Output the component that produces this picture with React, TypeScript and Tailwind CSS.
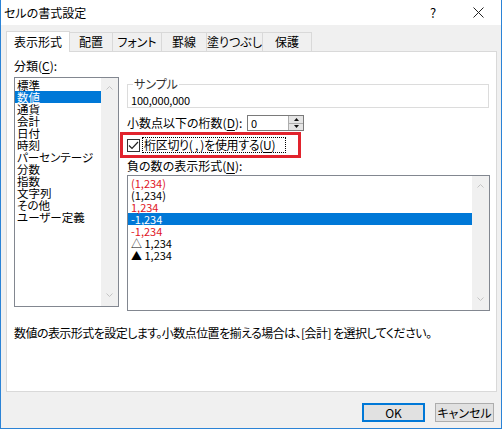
import React from "react";

const jp = "font-['Noto_Sans_CJK_JP','Noto_Sans',sans-serif] [font-feature-settings:'palt']";

const categories = ["標準", "数値", "通貨", "会計", "日付", "時刻", "パーセンテージ", "分数", "指数", "文字列", "その他", "ユーザー定義"];

const negatives = [
  { text: "(1,234)", red: true },
  { text: "(1,234)", red: false },
  { text: "1,234", red: true },
  { text: "-1,234", red: false, selected: true },
  { text: "-1,234", red: true },
  { text: "△ 1,234", red: false },
  { text: "▲ 1,234", red: false },
];

const tabs = [
  { label: "表示形式", w: "w-[64px]" },
  { label: "配置", w: "w-[43px]" },
  { label: "フォント", w: "w-[49px]" },
  { label: "罫線", w: "w-[45px]" },
  { label: "塗りつぶし", w: "w-[56px]" },
  { label: "保護", w: "w-[49px]" },
];

function Chevron({ dir }: { dir: "up" | "down" }) {
  return (
    <svg width="7" height="4" viewBox="0 0 7 4" className="block">
      <path
        d={dir === "up" ? "M0.5 3.5 L3.5 0.5 L6.5 3.5" : "M0.5 0.5 L3.5 3.5 L6.5 0.5"}
        fill="none"
        stroke="#c4c4c4"
        strokeWidth="1"
      />
    </svg>
  );
}

function ScrollBar() {
  return (
    <div className="w-[17px] bg-[#f0f0f0] flex flex-col justify-between items-center pt-[8px] pb-[9px]">
      <Chevron dir="up" />
      <Chevron dir="down" />
    </div>
  );
}

const U = ({ children }: { children: React.ReactNode }) => <span className="underline underline-offset-2">{children}</span>;

export default function App() {
  return (
    <div className={`w-[504px] h-[430px] bg-white text-[12px] leading-[12px] text-black ${jp}`}>
      <div className="w-[502px] h-[429px] border-l border-r border-b border-[#2b83d6] flex flex-col">
        {/* title bar */}
        <div className="h-[25px] bg-white flex items-center">
          <div className="flex-1 pl-[3px] pt-[1px]">セルの書式設定</div>
          <div className="w-[46px] text-center text-[13px]">?</div>
          <div className="w-[45px] flex justify-center">
            <svg width="11" height="11" viewBox="0 0 11 11">
              <path d="M0.5 0.5 L10.5 10.5 M10.5 0.5 L0.5 10.5" stroke="#222" strokeWidth="1" />
            </svg>
          </div>
        </div>

        {/* body */}
        <div className="flex-1 bg-[#f0f0f0] pl-[5px] pt-[6px] flex flex-col">
          <div className="flex items-end">
            {tabs.map((t, i) =>
              i === 0 ? (
                <div
                  key={t.label}
                  className={`${t.w} h-[21px] -mb-px relative z-10 bg-white border-l border-t border-r border-[#d9d9d9] flex items-center justify-center`}
                >
                  {t.label}
                </div>
              ) : (
                <div
                  key={t.label}
                  className={`${t.w} h-[19px] border-t border-r border-[#d9d9d9] flex items-center justify-center`}
                >
                  {t.label}
                </div>
              )
            )}
          </div>

          {/* panel */}
          <div className="w-[491px] h-[341px] bg-white border border-[#d9d9d9] flex flex-col">
            <div className="flex items-start">
              {/* category column */}
              <div className="pl-[7px] pt-[8px] flex flex-col">
                <div>
                  分類(<U>C</U>):
                </div>
                <div className="mt-[5px] w-[105px] h-[230px] border border-[#828790] flex">
                  <div className="flex-1 pt-[1px]">
                    {categories.map((c, i) => (
                      <div
                        key={c}
                        className={`h-[12px] leading-[12px] text-[11.5px] pl-[2px] whitespace-nowrap ${i === 1 ? "bg-[#0078d7] text-white" : ""}`}
                      >
                        {c}
                      </div>
                    ))}
                  </div>
                  <ScrollBar />
                </div>
              </div>

              {/* right column */}
              <div className="ml-[8px] pt-[26px] flex flex-col">
                <fieldset className="w-[362px] border border-[#dcdcdc] pl-[3px] pb-[1px]">
                  <legend className="ml-[2px] px-[1px] text-[#333]">サンプル</legend>
                  <div className="mt-[4px] h-[12px] text-[11px] tracking-[-0.2px]">100,000,000</div>
                </fieldset>

                <div className="mt-[7px] flex items-center">
                  <div className="w-[120px] whitespace-nowrap">
                    小数点以下の桁数(<U>D</U>):
                  </div>
                  <div className="w-[57px] h-[16px] border border-[#7a7a7a] flex bg-white">
                    <div className="flex-1 pl-[3px] pt-[1px] text-[11px]">0</div>
                    <div className="w-[15px] flex flex-col">
                      <div className="flex-1 bg-[#e5e5e5] border-l border-b border-[#adadad] flex items-center justify-center">
                        <svg width="5" height="3" viewBox="0 0 5 3">
                          <path d="M0 3 L2.5 0 L5 3 Z" fill="#111" />
                        </svg>
                      </div>
                      <div className="flex-1 bg-[#e5e5e5] border-l border-[#adadad] flex items-center justify-center">
                        <svg width="5" height="3" viewBox="0 0 5 3">
                          <path d="M0 0 L2.5 3 L5 0 Z" fill="#111" />
                        </svg>
                      </div>
                    </div>
                  </div>
                </div>

                <div className="mt-px -ml-[7px] w-[181px] h-[26px] border-[3px] border-[#e1232d] flex items-center pl-[4px]">
                  <div className="w-[13px] h-[13px] border border-[#333] bg-white flex items-center justify-center">
                    <svg width="11" height="9" viewBox="0 0 11 9">
                      <path d="M1 4.5 L4 7.5 L10 1" fill="none" stroke="#222" strokeWidth="1.2" />
                    </svg>
                  </div>
                  <div className="ml-[2px] h-[16px] w-[144px] border border-dotted border-black flex items-center pl-[1px] whitespace-nowrap tracking-[-0.3px]">
                    桁区切り( , )を使用する(<U>U</U>)
                  </div>
                </div>

                <div className="mt-[2px]">
                  負の数の表示形式(<U>N</U>):
                </div>
                <div className="mt-[3px] w-[363px] h-[136px] border border-[#828790] flex">
                  <div className="flex-1 pt-[1px]">
                    {negatives.map((n, i) => (
                      <div
                        key={i}
                        className={`h-[12px] pl-[3px] whitespace-nowrap text-[11px] ${
                          n.selected ? "bg-[#0078d7] text-white" : n.red ? "text-[#e0141e]" : "text-black"
                        }`}
                      >
                        {n.text}
                      </div>
                    ))}
                  </div>
                  <ScrollBar />
                </div>
              </div>
            </div>

            <div className="mt-[16px] pl-[7px] whitespace-nowrap tracking-[-0.55px]">
              数値の表示形式を設定します。小数点位置を揃える場合は、[会計] を選択してください。
            </div>
          </div>

          {/* buttons */}
          <div className="mt-[11px] flex justify-end gap-[10px] pr-[7px]">
            <div className="w-[63px] h-[19px] border-2 border-[#0078d7] bg-[#e1e1e1] flex items-center justify-center">OK</div>
            <div className="w-[59px] h-[19px] border border-[#adadad] bg-[#e1e1e1] flex items-center justify-center">キャンセル</div>
          </div>
        </div>
      </div>
    </div>
  );
}
